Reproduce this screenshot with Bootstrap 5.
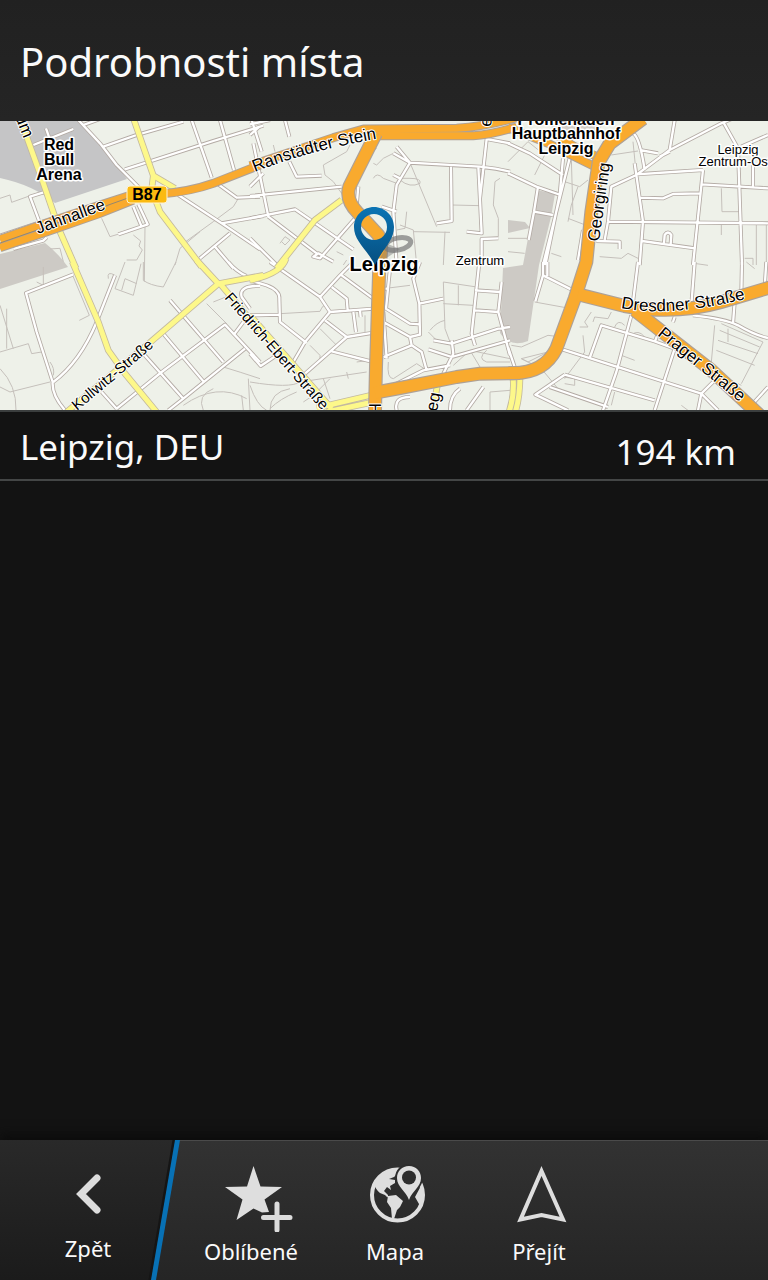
<!DOCTYPE html>
<html lang="cs">
<head>
<meta charset="utf-8">
<meta name="viewport" content="width=device-width, initial-scale=1">
<title>Podrobnosti místa</title>
<link href="https://cdn.jsdelivr.net/npm/bootstrap@5.3.0/dist/css/bootstrap.min.css" rel="stylesheet">
<script src="https://cdn.jsdelivr.net/npm/bootstrap@5.3.0/dist/js/bootstrap.bundle.min.js" defer></script>
<style>
body { background: #131313; color: #fafafa; font-family: "Noto Sans", sans-serif; }
.title-bar { background: linear-gradient(#212121, #252525); padding: 32px 20px 29px; }
.title-bar h1 { font-size: 40px; line-height: 60px; font-weight: 400; }
.place-map { width: 100%; height: auto; background: #eef1e9; }
.place-row { border-top: 2px solid #3b3e3e; border-bottom: 2px solid #444646; padding: 3px 32px 0 20px; font-size: 35px; line-height: 64px; }
.place-row .distance { padding-top: 10px; line-height: 54px; }
.action-bar { height: 140px; background: linear-gradient(#323232, #252525); border-top: 1px solid #4a4a4a; box-shadow: 0 -6px 10px #0c0c0c; font-size: 22px; line-height: 30px; }
.action { flex: 0 0 144px; padding: 23px 0 0; border: 0; background: none; color: #fafafa; }
.action svg { display: block; margin: 0 auto 4px; }
.action.back { flex-basis: 179px; padding: 20px 3px 0 0; position: relative; }
.action .backdrop { position: absolute; top: -1px; left: 0; width: 181px; height: 140px; margin: 0; }
.back .face { position: relative; }
.back .face svg { margin-bottom: 10px; }
.roads { fill: none; stroke-linejoin: round; }
.minor-edge { stroke: #b3aaa4; stroke-width: 12px; }
.minor-fill { stroke: #fff; stroke-width: 7px; }
.paths { stroke: #c5c0bb; stroke-width: 3px; }
.yellow-edge { stroke: #c3b9a0; stroke-width: 20px; }
.yellow-fill { stroke: #fdf88a; stroke-width: 15px; }
.orange-edge { stroke: #ada198; stroke-width: 42px; }
.orange-fill { stroke: #f9aa2e; stroke-width: 35px; }
.thin-edge { stroke: #ada198; stroke-width: 27px; }
.thin-fill { stroke: #f9aa2e; stroke-width: 21px; }
.names { font-family: "Liberation Sans", sans-serif; font-size: 17px; fill: #000; stroke: #fff; stroke-width: 3px; stroke-linejoin: round; paint-order: stroke; }
.names .strong { font-size: 16px; font-weight: 700; text-anchor: middle; }
.names .city { font-size: 20px; }
.names .district { font-size: 13px; text-anchor: middle; }
.names .road { stroke-width: 2px; }
.names .street { font-size: 15px; }
</style>
</head>
<body class="d-flex flex-column min-vh-100">
<header class="title-bar"><h1 class="m-0">Podrobnosti místa</h1></header>
<main class="flex-grow-1">
<svg class="place-map d-block" viewBox="0 121 768 289" role="img" aria-label="Mapa Leipzig">
<defs>
<linearGradient id="pin" x2="0" y2="1"><stop stop-color="#0b74b4"/><stop offset="1" stop-color="#064f80"/></linearGradient>
<g id="minor">
<g transform="translate(0 115) scale(.33333)">
<path d="M235 15L300 85L350 150L420 220M100 90L220 42M138 40L150 75M250 30L300 12M310 95L410 60L550 20M375 163L640 78L790 32M575 15L635 188M660 15L702 165M755 15L785 110M138 230L90 245L120 325M40 402L130 377L140 367M0 362L110 325M655 208L710 248L780 245M535 240L665 325L780 403M665 325L790 303M690 355L600 430M645 395L700 460M400 275L425 335M415 268L443 328L355 358M750 215L790 175"/>
</g>
<g transform="translate(0 262) scale(.33333)">
<path d="M220 37L78 93L110 210L158 360Q155 400 195 445M345 40L290 180Q240 300 160 360M510 115L670 300M490 215L610 358M430 275L550 410M350 440L485 330L675 188L780 300M505 445L550 410L735 260M305 390L350 440M700 220L730 180M685 0Q710 30 740 42M780 72Q715 70 725 105L750 140"/>
</g>
<g transform="translate(250 115) scale(.33333)">
<path d="M0 28L60 15M0 60L28 35M10 85L52 290L55 305M105 15L118 65M118 140L140 185L215 182M0 243L275 215M0 310L135 283L310 403M55 305L200 415M0 370L80 450M315 310L210 430L190 425L205 415L250 440M325 215L320 270M430 115L480 143L690 155Q740 160 780 170M480 143L440 95M480 143L440 210L430 290L440 450M430 180L450 190M603 155L605 318L560 325M685 155L695 355L650 350M780 85L710 72L690 250M695 450L695 372L745 370M395 275L440 290"/>
</g>
<g transform="translate(250 262) scale(.33333)">
<path d="M60 0L210 105L240 150L165 240L130 300M0 55L50 70Q90 85 88 110L90 180L170 243M0 160L88 158M240 150L370 140M275 40L370 110M270 40L210 105M245 75L290 110L293 145M310 150L318 210M330 145L332 165M225 175L290 225L370 212M290 225L165 335M245 268L370 300M0 275L32 312L80 280M310 0L270 40M400 80L415 80M422 0L408 140L480 185L508 187M510 0L490 50L508 125L510 218L480 225L400 180M400 150L410 290M508 125L580 110M480 225L485 250L400 285M485 250L515 270L530 325M430 370L520 325L600 310M550 235L605 245L745 200L780 195M605 235L610 275L580 335M535 262L605 285L780 235M688 0L665 215L675 250M675 85L750 90M675 145L745 150L755 60M745 150L780 280M600 445Q600 400 630 380M650 445L700 375M440 445Q430 405 480 405"/>
</g>
<g transform="translate(508 115) scale(.33333)">
<path d="M0 85L65 115L165 180M185 130L105 450M165 130L155 240L112 450M0 175L85 215L158 240M90 215L78 290L62 375M78 290L135 300M485 110L455 125M375 55Q395 65 410 165M380 145L405 320L395 450M780 -35L640 25L485 105L385 180L310 215L300 320L290 375M500 15L485 105M645 20L690 100L702 450M395 105L450 115M385 178L585 165M585 165L555 450M580 208L700 215L780 220M735 150L735 215M395 248L465 250L495 237L575 235M300 320L780 325M402 378L560 400M468 385L470 360Q480 345 490 360L488 388M265 378L335 380L335 402M225 345L210 435M700 95L780 60"/>
</g>
<g transform="translate(508 262) scale(.33333)">
<path d="M105 0L105 40L195 85M118 0L118 42M105 40L82 118M390 0L375 120M560 0L550 130M702 0L700 95M775 0L770 75M680 120L675 185M0 255L20 315M370 160L325 330L285 445M245 288L280 190L440 238L500 260L440 445M165 263L580 395L630 445M500 165L495 180M440 240L450 215M170 338L440 415M170 338L82 398L180 445M125 375L300 435M580 395L570 445M580 395L620 355M780 375L730 430M555 160Q650 170 690 190Q740 220 780 228"/>
</g>
</g>
<g id="yellow">
<path transform="translate(0 115) scale(.33333)" d="M60 10L125 190L180 350L228 460M402 15L460 182L455 225L480 290L605 455M460 182L525 220"/>
<path transform="translate(0 262) scale(.33333)" d="M217 0L295 180L325 265L375 335L470 450M590 -5L655 65L510 190L440 250L200 450M655 65L790 40M660 65L790 220"/>
<path transform="translate(250 115) scale(.33333)" d="M275 255L195 315L80 460"/>
<path transform="translate(250 262) scale(.33333)" d="M108 -10Q95 35 0 55M0 160L245 440M200 438L370 398M230 450L370 420M565 350L550 445"/>
<path transform="translate(508 262) scale(.33333)" d="M15 345Q20 400 3 450M36 345Q35 410 22 450"/>
</g>
<g id="thin">
<path transform="translate(0 115) scale(.33333)" d="M0 373L130 327L300 270L400 238M0 398L150 347L300 295L400 255M480 237Q570 230 640 205L780 150"/>
<path transform="translate(250 115) scale(.33333)" d="M0 152L250 68L340 42L620 40Q700 35 800 8M380 62L670 62Q720 60 800 36"/>
<path transform="translate(508 115) scale(.33333)" d="M0 37L120 85L200 125L270 160M130 50L200 95L290 135"/>
</g>
<g id="orange">
<path transform="translate(250 115) scale(.33333)" d="M378 55L298 215Q285 255 325 295L385 360Q400 390 388 450L378 755L375 890"/>
<path transform="translate(250 262) scale(.33333)" d="M375 392L450 378L620 345L690 335L810 333"/>
<path transform="translate(508 262) scale(.33333)" d="M0 333Q105 340 145 260L200 110L235 0L250 -150L272 -300L305 -355L405 -430"/>
<path transform="translate(508 262) scale(.33333)" d="M210 97L350 132Q500 160 640 120L790 75"/>
<path transform="translate(508 262) scale(.33333)" d="M380 145L610 325L755 460"/>
</g>
</defs>
<g fill="#c5c5c6">
<path d="M0 121H78L100 143L127 179L55 203Q33 185 0 178Z"/>
<path fill="#cdcac5" d="M0 254L45 243Q58 253 68 267L0 289ZM537 190L555 194L551 217L539 265L528 341Q510 348 500 333L503 268L523 265ZM508 220L525 222L530 228L508 233Z"/>
<path fill="#d2cdc7" d="M550 121H606L592 138H555Z"/>
</g>
<g class="roads">
<g class="paths">
<path transform="translate(0 115) scale(.33333)" d="M305 310L330 365L430 335M435 335L433 500M400 360L422 378L417 393L427 405L410 435L380 435M600 350L540 400L525 450M715 250L700 275L640 320L550 385M0 250L30 240L35 262L110 235M150 402L180 400L190 440"/>
<path transform="translate(0 262) scale(.33333)" d="M130 15L130 70L110 60M220 45L268 160L238 175M325 50Q320 25 345 40M375 0L345 80L400 100L423 5M375 50L410 65M375 50L365 85M430 0L430 55Q450 70 490 75L528 0M0 130L40 260M20 140L20 260M0 270L85 245L95 275L125 270M0 320Q50 370 48 445M0 375L30 390L150 360M150 300Q165 320 160 340M620 125L680 185M640 120L690 100M670 315Q720 330 780 350M550 430Q650 360 740 410M725 400L730 445M745 350L750 445M610 445Q590 400 640 380"/>
<path transform="translate(250 115) scale(.33333)" d="M70 90L75 110M300 90L290 110L220 150L225 180L250 200L275 235M380 100L330 130L320 200M430 115L400 130L380 150L370 145M370 190Q380 170 400 190L440 205M480 143L560 335M450 195Q480 220 510 205Q515 190 480 190L440 190M605 270L690 272M750 190L735 200L730 270L745 310L745 365M470 290L465 340L440 345M490 350L600 352M450 330L490 345L500 450M585 350L580 450M90 385L105 365L120 375L105 390L95 380M280 420L260 410M280 450L290 435"/>
<path transform="translate(250 262) scale(.33333)" d="M90 155L210 148Q220 125 230 130M345 160L345 210M320 300L360 295M180 250L210 280L210 300M210 200L260 250M0 360Q120 380 150 360L350 330M0 370Q20 430 50 445M60 445Q60 390 120 380M140 390Q90 410 60 440M220 350L240 410M240 350L190 400L160 420M290 330L295 350M400 80L480 70M580 60L585 200L600 240M580 60L680 75M580 125L670 130M625 70L625 130M540 205Q560 180 585 175M535 210L560 235M610 310L660 265L690 315M710 265Q680 290 710 300L780 300M660 265L780 290M530 325L500 305L430 350Q410 350 415 300M720 445L720 390L780 385"/>
<path transform="translate(508 115) scale(.33333)" d="M170 200L215 215L240 195M190 130L195 300M210 215L190 270L180 320M180 310L245 335M310 120L390 108M375 80L385 180M640 220L642 290L700 290M640 330L640 360M275 425L340 430L360 415L390 430M130 415L160 425M60 80L110 120L80 180M0 370L60 370M0 410L50 415M735 450L735 430L710 430M0 140L60 80M775 330L775 450M745 330L745 450"/>
<path transform="translate(508 262) scale(.33333)" d="M80 120L190 140M250 150L230 180L240 195L215 195M310 150L300 170L260 165L255 180M320 195Q330 170 350 190M370 220Q390 200 410 225M225 220L230 270L170 350M10 250L40 255L120 220L160 225M40 290L120 270L60 300L40 290L80 310M100 320L150 380M340 280L380 295M320 390L310 430M170 365L200 370L200 350L165 345M620 190L610 300M640 185L765 240L700 365M635 205L755 255M630 235L750 275M625 265L740 310M660 200L660 240M715 0L740 20M565 5L600 10M620 330L700 370M520 430L540 445"/>
</g>
<use href="#minor" class="minor-edge"/><use href="#minor" class="minor-fill"/>
<use href="#yellow" class="yellow-edge"/><use href="#yellow" class="yellow-fill"/>
<use href="#thin" class="thin-edge"/><use href="#thin" class="thin-fill"/>
<use href="#orange" class="orange-edge"/><use href="#orange" class="orange-fill"/>
<path d="M0 243L43 228L100 208L128 198" stroke="#94876f"/>
</g>
<ellipse cx="398" cy="244" rx="13" ry="6" fill="none" stroke="#777" stroke-opacity=".7" stroke-width="5" transform="rotate(-12 398 244)"/>
<path d="M376 265L388 244L400 249Z" fill="#777" opacity=".45"/>
<g class="names">
<defs>
<path id="ranstadt" d="M255 172Q317 147 402 135"/>
<path id="dresden" d="M621 308Q676 319 768 293"/>
</defs>
<text class="strong" x="59" y="150">Red</text><text class="strong" x="59" y="165">Bull</text><text class="strong" x="59" y="180">Arena</text>
<text class="strong" x="566" y="125">Promenaden</text><text class="strong" x="566" y="139">Hauptbahnhof</text><text class="strong" x="566" y="154">Leipzig</text>
<text class="strong city" x="384" y="271">Leipzig</text>
<text class="district" x="480" y="265">Zentrum</text><text class="district" x="738" y="154">Leipzig</text>
<text class="district" x="735" y="166">Zentrum-Ost</text>
<text class="road" transform="translate(38 234) rotate(-20)">Jahnallee</text>
<text class="road"><textPath href="#ranstadt">Ranstädter Stein</textPath></text>
<text class="road"><textPath href="#dresden">Dresdner Straße</textPath></text>
<text class="road" transform="translate(657 335) rotate(39)">Prager Straße</text>
<text class="road" transform="translate(599 242) rotate(-82)">Georgiring</text>
<text class="road street" transform="translate(77 411) rotate(-40)">Kollwitz-Straße</text>
<text class="road street" transform="translate(224 298) rotate(49)">Friedrich-Ebert-Straße</text>
<text class="road" transform="translate(15 117) rotate(68)">um</text>
<text class="road" transform="translate(437 412) rotate(-80)">eg</text>
<text class="road" transform="translate(369 403) rotate(90)">H</text>
<text class="road" transform="translate(491 127) rotate(-85)">e</text>
</g>
<rect x="127" y="186" width="40" height="17" rx="3" fill="#fbba10" stroke="#fff3d0"/>
<text x="147" y="200" text-anchor="middle" font-family="Liberation Sans, sans-serif" font-size="16" font-weight="700">B87</text>
<path fill="url(#pin)" fill-rule="evenodd" d="M374 207C363 207 354 216 354 227C354 241 366 248 375 265C383 248 394 241 394 227C394 216 385 207 374 207ZM374 214A13 13 0 1 1 374 240A13 13 0 1 1 374 214Z"/>
</svg>
<section class="place-row d-flex justify-content-between">
<span>Leipzig, DEU</span><span class="distance">194 km</span>
</section>
</main>
<footer>
<nav class="action-bar d-flex align-items-start" aria-label="Akce">
<button type="button" class="action back">
<svg class="backdrop" viewBox="0 0 181 140" aria-hidden="true"><defs><linearGradient id="side" x2="0" y2="1"><stop stop-color="#292929"/><stop offset="1" stop-color="#1b1b1b"/></linearGradient></defs><path d="M0 0H175L151 140H0Z" fill="url(#side)"/><path d="M174 0L150 140" stroke="#151515" stroke-width="3"/><path d="M175 0H180L156 140H151Z" fill="#0871b5"/></svg>
<span class="face d-block"><svg width="56" height="62" viewBox="0 0 56 62" aria-hidden="true"><path d="M37 17L21 33L37 49" fill="none" stroke="#dcdcdc" stroke-width="7" stroke-linecap="round"/></svg>Zpět</span>
</button>
<button type="button" class="action"><svg width="84" height="68" viewBox="201 1164 84 68" aria-hidden="true"><path d="M245.500 1166L252.500 1186.500L274 1187L256.500 1199.500L261 1212L254 1212.500L245.500 1208.500L228.500 1220L234.500 1199.500L217 1187L239 1186.500Z" fill="#dedede"/><path d="M269 1204V1230M255.500 1217.500H282" stroke="#dcdcdc" stroke-width="5" stroke-linecap="round"/></svg>Oblíbené</button>
<button type="button" class="action"><svg width="60" height="68" viewBox="365 1164 60 68" aria-hidden="true"><circle cx="397.500" cy="1195" r="25.500" fill="none" stroke="#dedede" stroke-width="4"/><path fill="#dedede" d="M397 1168Q382 1170 374 1184Q376 1190 380 1193L385 1195L388 1198L388 1195L384 1191L387 1187L391 1190L390 1186L395 1183L395 1180L389 1179L394 1177L397 1174ZM388 1196L396 1195L403 1201L400 1207L397 1210L394 1219L392 1219L391 1208L387 1202ZM422 1184L415 1197L419 1204L418 1211Q425 1202 422 1184Z"/><path fill="#dedede" stroke="#2d2d2d" stroke-width="4" paint-order="stroke" d="M409 1166C402 1166 397 1171 397 1178C397 1187 406 1191 409 1200C412 1191 421 1187 421 1178C421 1171 416 1166 409 1166Z"/><circle cx="409" cy="1177.500" r="7" fill="#2e2e2e"/></svg>Mapa</button>
<button type="button" class="action"><svg width="60" height="68" viewBox="509 1164 60 68" aria-hidden="true"><path d="M541.500 1171L520.500 1219.500L541.500 1215L563 1219.500Z" fill="none" stroke="#dedede" stroke-width="4"/></svg>Přejít</button>
</nav>
</footer>
</body>
</html>
